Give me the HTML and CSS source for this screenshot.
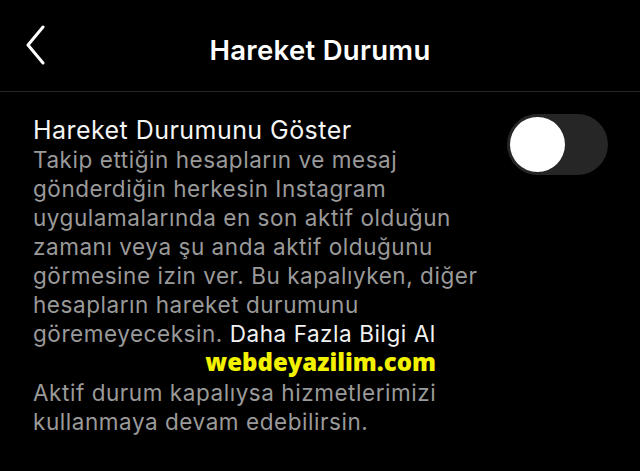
FILE: index.html
```html
<!DOCTYPE html>
<html lang="tr">
<head>
<meta charset="utf-8">
<link rel="stylesheet" href="styles.css">
</head>
<body>
<div class="screen">
  <header class="header">
    <svg class="back" width="24" height="40" viewBox="0 0 24 40"><path d="M19 2 L4 20 L19 38" fill="none" stroke="#fff" stroke-width="3" stroke-linecap="round" stroke-linejoin="round"/></svg>
    <h1 class="title">Hareket Durumu</h1>
  </header>
  <main class="content">
    <div class="row">
      <div class="text">
        <div class="label">Hareket Durumunu Göster</div>
        <p class="desc">Takip ettiğin hesapların ve mesaj gönderdiğin herkesin Instagram uygulamalarında en son aktif olduğun zamanı veya şu anda aktif olduğunu görmesine izin ver. Bu kapalıyken, diğer hesapların hareket durumunu göremeyeceksin. <span class="link">Daha Fazla Bilgi Al</span></p>
        <div class="wm">webdeyazilim.com</div>
        <p class="desc">Aktif durum kapalıysa hizmetlerimizi kullanmaya devam edebilirsin.</p>
      </div>
      <div class="toggle"><div class="knob"></div></div>
    </div>
  </main>
</div>
</body>
</html>
```
FILE: styles.css
```css
html, body { margin: 0; padding: 0; background: #000; }
.screen { width: 640px; height: 471px; background: #000; color: #fff; font-family: Inter, "Noto Sans", sans-serif; overflow: hidden; }
.header { height: 92px; border-bottom: 1px solid #262626; display: flex; align-items: center; justify-content: center; position: relative; box-sizing: border-box; padding-top: 9px; }
.back { position: absolute; left: 24px; top: 25px; }
.title { margin: 0; font-size: 27.5px; font-weight: 600; letter-spacing: 0.3px; }
.content { padding: 23px 32px 0 33px; }
.row { display: flex; justify-content: space-between; align-items: flex-start; }
.text { width: 452px; }
.label { font-size: 25px; line-height: 30px; color: #f5f5f5; letter-spacing: 0.45px; }
.desc { margin: 0; font-size: 22.5px; line-height: 29px; color: #9a9a9a; letter-spacing: 0.55px; }
.link { color: #f2f2f2; }
.wm { width: 403px; text-align: right; font-family: "Open Sans", sans-serif; font-weight: 800; font-size: 24px; line-height: 24px; color: #f2f200; margin: 2px 0 4px; }
.toggle { width: 101px; height: 61px; border-radius: 31px; background: #262626; margin-top: -1px; display: flex; align-items: center; padding-left: 3px; box-sizing: border-box; flex-shrink: 0; }
.knob { width: 55px; height: 55px; border-radius: 50%; background: #fff; }
```
